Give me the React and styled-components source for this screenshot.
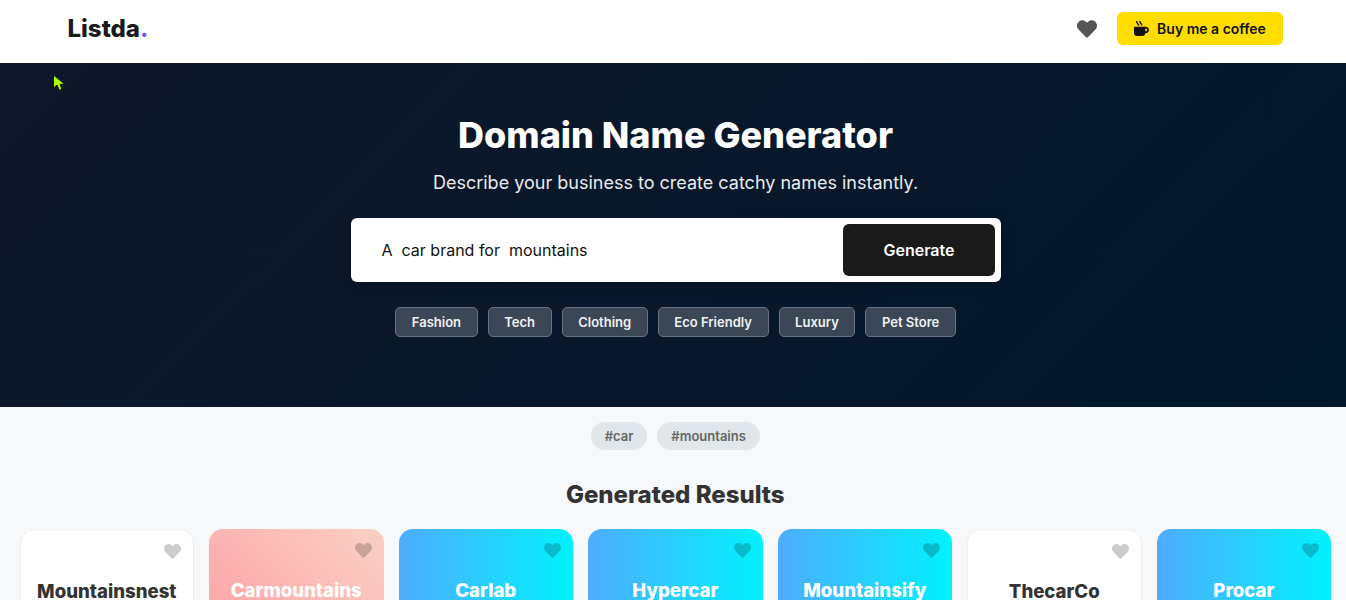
import React from 'react';
import styled, { createGlobalStyle } from 'styled-components';
import { FaHeart, FaMugHot } from 'react-icons/fa';

const GlobalStyle = createGlobalStyle`
  * {
    box-sizing: border-box;
  }
  body {
    margin: 0;
    font-family: Inter, 'Liberation Sans', sans-serif;
    background: #f7f8fa;
  }
`;

const Page = styled.div`
  position: relative;
  height: 100vh;
  overflow: hidden;
`;

const Header = styled.header`
  height: 63px;
  padding: 12px 63px 0 67.5px;
  display: flex;
  justify-content: space-between;
  align-items: flex-start;
  background: white;
`;

const Logo = styled.div`
  font-size: 24px;
  font-weight: 800;
  line-height: 34px;
  color: #1a1a1a;
  span {
    color: #6c5ce7;
  }
`;

const HeaderRight = styled.div`
  display: flex;
  align-items: center;
  gap: 20px;
  height: 33px;
`;

const HeartLink = styled.div`
  display: flex;
  color: #555;
  font-size: 20px;
`;

const CoffeeBtn = styled.div`
  width: 166px;
  height: 33px;
  display: flex;
  align-items: center;
  justify-content: center;
  gap: 8px;
  background: #ffdd00;
  border-radius: 6px;
  color: #111;
  font-size: 14px;
  font-weight: 600;
`;

const Hero = styled.section`
  height: 344px;
  padding: 49px 0 0 5px;
  display: flex;
  flex-direction: column;
  align-items: center;
  background: linear-gradient(135deg, #0f172a 0%, #02182c 100%);
  color: white;
`;

const Title = styled.h1`
  margin: 0;
  font-size: 36px;
  font-weight: 800;
  line-height: 46px;
`;

const Subtitle = styled.p`
  margin: 13px 0 0;
  font-size: 18px;
  line-height: 24px;
  color: #e9ebee;
`;

const Form = styled.div`
  margin-top: 23px;
  width: 650px;
  height: 64px;
  padding: 6px;
  display: flex;
  align-items: center;
  justify-content: space-between;
  background: white;
  border-radius: 6px;
  box-shadow: 0 4px 12px rgba(0, 0, 0, 0.2);
`;

const InputText = styled.div`
  padding-left: 25px;
  font-size: 16px;
  color: #111;
  white-space: pre;
`;

const GenerateBtn = styled.div`
  width: 152px;
  height: 52px;
  padding-left: 1px;
  display: flex;
  align-items: center;
  justify-content: center;
  background: #1a1a1a;
  border-radius: 6px;
  color: white;
  font-size: 16px;
  font-weight: 600;
`;

const Chips = styled.div`
  margin-top: 25px;
  display: flex;
  gap: 10px;
`;

const Chip = styled.div`
  height: 30px;
  padding: 0 15.6px;
  display: flex;
  align-items: center;
  background: #3b4656;
  border: 1px solid #6b7280;
  border-radius: 5px;
  color: #f1f2f4;
  font-size: 13px;
  font-weight: 600;
`;

const Results = styled.section`
  padding: 15px 15px 0 19.5px;
  background: #f7f8fa;
`;

const Tags = styled.div`
  display: flex;
  justify-content: center;
  gap: 10px;
`;

const Tag = styled.div`
  height: 28px;
  padding: 0 14px;
  display: flex;
  align-items: center;
  background: #e0e6e9;
  border-radius: 14px;
  color: #666;
  font-size: 13px;
  font-weight: 600;
`;

const Heading = styled.h2`
  margin: 30px 0 19px;
  text-align: center;
  font-size: 24px;
  font-weight: 800;
  line-height: 30px;
  color: #333;
`;

const Grid = styled.div`
  display: grid;
  grid-template-columns: repeat(7, 1fr);
  gap: 15px;
`;

const backgrounds = {
  white: 'white',
  pink: 'linear-gradient(45deg, #ff9a9e 0%, #fad0c4 100%)',
  blue: 'linear-gradient(90deg, #4facfe 0%, #00f2fe 100%)',
};

const Card = styled.div`
  position: relative;
  height: 160px;
  padding-top: 49px;
  text-align: center;
  background: ${(p) => backgrounds[p.$kind]};
  border: ${(p) => (p.$kind === 'white' ? '1px solid #eceef0' : 'none')};
  border-radius: 14px;
  color: ${(p) => (p.$kind === 'white' ? '#333' : 'white')};
  font-size: 18.6px;
  font-weight: 800;
  line-height: 24px;
`;

const CardHeart = styled.div`
  position: absolute;
  top: 13px;
  right: 12px;
  display: flex;
  font-size: 17px;
  color: ${(p) => (p.$kind === 'white' ? '#ccc' : 'rgba(0, 0, 0, 0.2)')};
`;

const Cursor = styled.svg`
  position: absolute;
  left: 52px;
  top: 74px;
`;

const chips = ['Fashion', 'Tech', 'Clothing', 'Eco Friendly', 'Luxury', 'Pet Store'];

const cards = [
  ['Mountainsnest', 'white'],
  ['Carmountains', 'pink'],
  ['Carlab', 'blue'],
  ['Hypercar', 'blue'],
  ['Mountainsify', 'blue'],
  ['ThecarCo', 'white'],
  ['Procar', 'blue'],
];

export default function App() {
  return (
    <Page>
      <GlobalStyle />
      <Header>
        <Logo>
          Listda<span>.</span>
        </Logo>
        <HeaderRight>
          <HeartLink>
            <FaHeart />
          </HeartLink>
          <CoffeeBtn>
            <FaMugHot size={15} />
            Buy me a coffee
          </CoffeeBtn>
        </HeaderRight>
      </Header>
      <Hero>
        <Title>Domain Name Generator</Title>
        <Subtitle>Describe your business to create catchy names instantly.</Subtitle>
        <Form>
          <InputText>A  car brand for  mountains</InputText>
          <GenerateBtn>Generate</GenerateBtn>
        </Form>
        <Chips>
          {chips.map((c) => (
            <Chip key={c}>{c}</Chip>
          ))}
        </Chips>
      </Hero>
      <Results>
        <Tags>
          <Tag>#car</Tag>
          <Tag>#mountains</Tag>
        </Tags>
        <Heading>Generated Results</Heading>
        <Grid>
          {cards.map(([name, kind]) => (
            <Card key={name} $kind={kind}>
              <CardHeart $kind={kind}>
                <FaHeart />
              </CardHeart>
              {name}
            </Card>
          ))}
        </Grid>
      </Results>
      <Cursor width="14" height="19" viewBox="0 0 14 19">
        <path d="M1.5 1 L1.5 14 L5 11 L7.5 16.5 L10 15 L8 10.5 L12.5 10 Z" fill="#aaff00" stroke="#10180f" strokeWidth="1" />
      </Cursor>
    </Page>
  );
}
